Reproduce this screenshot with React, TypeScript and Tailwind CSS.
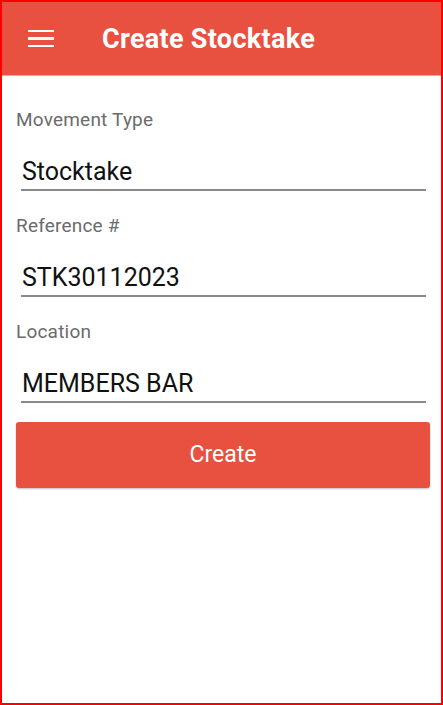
import React from "react";

const fields = [
  { label: "Movement Type", value: "Stocktake" },
  { label: "Reference #", value: "STK30112023" },
  { label: "Location", value: "MEMBERS BAR" },
];

export default function App() {
  return (
    <div
      className="w-[443px] h-[705px] border-2 border-[#ff0000] bg-white flex flex-col overflow-hidden"
      style={{ fontFamily: "Roboto, 'Liberation Sans', sans-serif" }}
    >
      <div className="h-[74px] shrink-0 bg-[#e8503f] flex items-center border-b border-[#f2a59c]">
        <div className="ml-[26px] w-[26px] flex flex-col gap-[5px]">
          <div className="h-[2.5px] bg-white" />
          <div className="h-[2.5px] bg-white" />
          <div className="h-[2.5px] bg-white" />
        </div>
        <div className="ml-[48px] mt-[2px] text-white text-[27px] font-bold leading-none tracking-[0.3px]">
          Create Stocktake
        </div>
      </div>
      <div className="flex flex-col pl-[14px] pr-[11px] pt-[32px]">
        {fields.map((f, i) => (
          <div key={i} className={i === 0 ? "" : "mt-[23px]"}>
            <div className="h-6 leading-6 text-[19px] text-[#6b6b6b] tracking-[0.2px]">{f.label}</div>
            <div className="mt-6 ml-[5px] mr-[4px]">
              <div className="h-[33px] leading-8 text-[25px] text-[#111] pl-px">{f.value}</div>
              <div className="h-[2px] bg-[#8a8a8a]" />
            </div>
          </div>
        ))}
        <button className="mt-[19px] h-[66px] w-full rounded-[3px] bg-[#e8503f] text-white text-[23px] shadow-[0_1px_2px_rgba(0,0,0,0.25)]">
          Create
        </button>
      </div>
    </div>
  );
}
